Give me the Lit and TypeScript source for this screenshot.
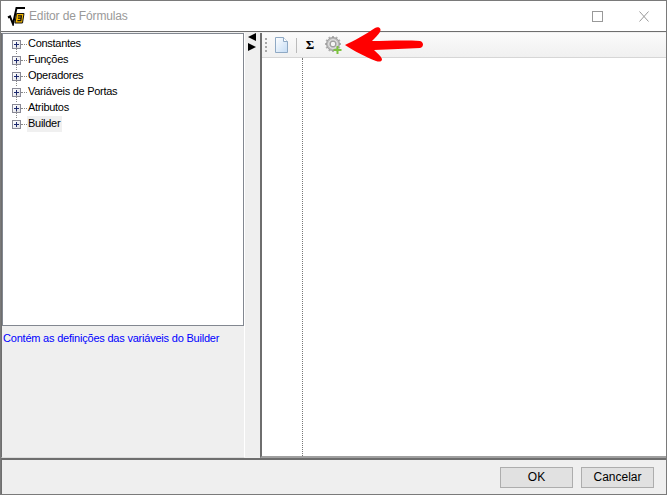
import { LitElement, html, css, svg } from "lit";
import { customElement } from "lit/decorators.js";

const NODES = ["Constantes", "Funções", "Operadores", "Variáveis de Portas", "Atributos", "Builder"];

@customElement("app-root")
export class AppRoot extends LitElement {
  static styles = css`
    :host { display: block; width: 667px; height: 495px; font-family: "Liberation Sans", Arial, sans-serif; font-size: 11px; color: #000; }
    * { box-sizing: border-box; }
    .win { width: 667px; height: 495px; display: flex; flex-direction: column; background: #f0f0f0; border: 1px solid #7a7a7a; position: relative; }
    .title { height: 30px; background: #fff; display: flex; align-items: center; flex: none; }
    .logo { margin-left: 6px; width: 18px; height: 20px; flex: none; }
    .ttl { margin-left: 4px; color: #999; font-size: 12px; letter-spacing: -0.15px; }
    .wbtns { margin-left: auto; display: flex; }
    .wbtn { width: 46px; height: 30px; display: flex; align-items: center; justify-content: center; }
    .main { flex: 1; display: flex; border-top: 1px solid #6e6e6e; border-bottom: 2px solid #6e6e6e; min-height: 0; padding-top: 1px; }
    .left { width: 244px; flex: none; display: flex; flex-direction: column; border-left: 1px solid #6e6e6e; border-right: 1px solid #fff; border-bottom: 1px solid #dcdcdc; background: #efefef; }
    .tree { height: 293px; flex: none; background: #fff; border: 1px solid #828790; padding: 2px 0 0 9px; }
    .row { height: 16px; display: flex; align-items: center; position: relative; }
    .exp { width: 9px; height: 9px; border: 1px solid #8a8a96; background: linear-gradient(135deg,#fff,#dfe0e6); position: relative; flex: none; }
    .exp::before { content: ""; position: absolute; left: 1px; top: 3px; width: 5px; height: 1px; background: #1e2a6e; }
    .exp::after { content: ""; position: absolute; left: 3px; top: 1px; width: 1px; height: 5px; background: #1e2a6e; }
    .dash { width: 6px; border-top: 1px dotted #888; flex: none; }
    .label { padding: 0 2px 0 1px; height: 16px; line-height: 15px; font-size: 11px; letter-spacing: -0.28px; white-space: nowrap; }
    .sel { background: #f0f0f0; }
    .vline { position: absolute; left: 4px; top: 11px; height: 7px; border-left: 1px dotted #888; }
    .desc { color: #0000ff; padding: 5px 0 0 1px; font-size: 11px; line-height: 15px; letter-spacing: -0.21px; white-space: nowrap; }
    .split { width: 15px; flex: none; display: flex; flex-direction: column; padding: 0 0 0 3px; background: #efefef; }
    .right { flex: 1; min-width: 0; display: flex; flex-direction: column; border-left: 2px solid #6e6e6e; border-bottom: 2px solid #a0a0a0; }
    .tools { height: 25px; flex: none; display: flex; align-items: center; background: linear-gradient(#fbfbfb,#f0f0f0); border-bottom: 1px solid #d6d6d6; position: relative; }
    .grip { width: 2px; height: 14px; margin-left: 3px; background: repeating-linear-gradient(#a8a8a8 0 2px, transparent 2px 4px); flex: none; }
    .doc { margin-left: 8px; flex: none; }
    .sep { width: 1px; height: 15px; background: #bbb; margin-left: 8px; flex: none; }
    .sigma { margin-left: 7px; width: 12px; text-align: center; font: bold 13px "Liberation Serif", serif; flex: none; }
    .gear { margin-left: 9px; flex: none; }
    .arrow { position: absolute; left: 82px; top: -7px; pointer-events: none; overflow: visible; }
    .editor { flex: 1; background: #fff; display: flex; }
    .gutter { width: 41px; border-right: 1px dotted #777; flex: none; }
    .bottom { height: 34px; flex: none; display: flex; justify-content: flex-end; align-items: center; gap: 8px; padding: 0 12px 0 0; background: #efefef; border-left: 1px solid #6e6e6e; }
    .btn { width: 73px; height: 21px; border: 1px solid #adadad; background: #e1e1e1; font: 12px "Liberation Sans", Arial, sans-serif; color: #000; padding: 0; }
  `;

  private logo() {
    return svg`<svg class="logo" viewBox="0 0 18 20">
      <path d="M1 11.5 L3 10.5 L6 18 L9.5 2 H18" fill="none" stroke="#000" stroke-width="2"/>
      <path d="M9.5 7.5 H17 L15.5 17 H8 Z" fill="#f5b800" stroke="#111" stroke-width="1"/>
      <path d="M11 9.8h3.4L13.8 14.6H10.4M10.9 12.2h3.2" stroke="#111" stroke-width="1.2" fill="none"/>
    </svg>`;
  }

  private docIcon() {
    return svg`<svg class="doc" width="13" height="16" viewBox="0 0 13 16">
      <defs><linearGradient id="dg" x1="0" y1="0" x2="1" y2="1"><stop offset="0" stop-color="#fff"/><stop offset="1" stop-color="#c4dcf5"/></linearGradient></defs>
      <path d="M.5.5H8.5L12.5 4.5V15.5H.5Z" fill="url(#dg)" stroke="#8fa9c4"/>
      <path d="M8.5 .5V4.5H12.5" fill="#fff" stroke="#8fa9c4"/>
    </svg>`;
  }

  private gearIcon() {
    return svg`<svg class="gear" width="17" height="18" viewBox="0 0 17 18">
      <g transform="translate(8 8)">
        ${[0, 30, 60, 90, 120, 150].map(a => svg`<rect x="-1" y="-8" width="2" height="16" fill="#b0b0b0" transform="rotate(${a})"/>`)}
        <circle r="6.4" fill="#c2c2c2" stroke="#999" stroke-width="1"/>
        <circle r="4.4" fill="none" stroke="#e2e2e2" stroke-width="1"/>
        <circle r="2.8" fill="#f5f5f5" stroke="#969696" stroke-width="1"/>
      </g>
      <path d="M11.5 10h2v3h3v2h-3v3h-2v-3h-3v-2h3Z" fill="#7cc23f"/>
    </svg>`;
  }

  render() {
    return html`<div class="win">
      <div class="title">
        ${this.logo()}
        <span class="ttl">Editor de Fórmulas</span>
        <div class="wbtns">
          <div class="wbtn"><svg width="11" height="11"><rect x="0.5" y="0.5" width="10" height="10" fill="none" stroke="#999"/></svg></div>
          <div class="wbtn"><svg width="11" height="11"><path d="M1.5.5l9 10M10.5.5l-9 10" stroke="#999" fill="none"/></svg></div>
        </div>
      </div>
      <div class="main">
        <div class="left">
          <div class="tree">
            ${NODES.map((n, i) => html`<div class="row">
              <span class="exp"></span><span class="dash"></span>
              <span class="label ${n === "Builder" ? "sel" : ""}">${n}</span>
              ${i < NODES.length - 1 ? html`<span class="vline"></span>` : ""}
            </div>`)}
          </div>
          <div class="desc">Contém as definições das variáveis do Builder</div>
        </div>
        <div class="split">
          <svg width="9" height="19" viewBox="0 0 9 19"><path d="M8 0V8L0 4Z M0 10V18L8 14Z" fill="#000"/></svg>
        </div>
        <div class="right">
          <div class="tools">
            <span class="grip"></span>
            ${this.docIcon()}
            <span class="sep"></span>
            <span class="sigma">Σ</span>
            ${this.gearIcon()}
            <svg class="arrow" width="80" height="36" viewBox="0 0 80 36">
              <path d="M1 19 C10 15 22 8 31 2 C34 0 38 2 36 6 C34 9 31 12 28 15 C42 15 60 14 76 15 C80 16 80 21 76 22 C62 23 46 23 30 24 C33 27 37 30 38 33 C38 36 35 36 32 35 C22 31 10 25 1 19Z" fill="#f00"/>
            </svg>
          </div>
          <div class="editor"><div class="gutter"></div></div>
        </div>
      </div>
      <div class="bottom">
        <button class="btn">OK</button>
        <button class="btn">Cancelar</button>
      </div>
    </div>`;
  }
}
